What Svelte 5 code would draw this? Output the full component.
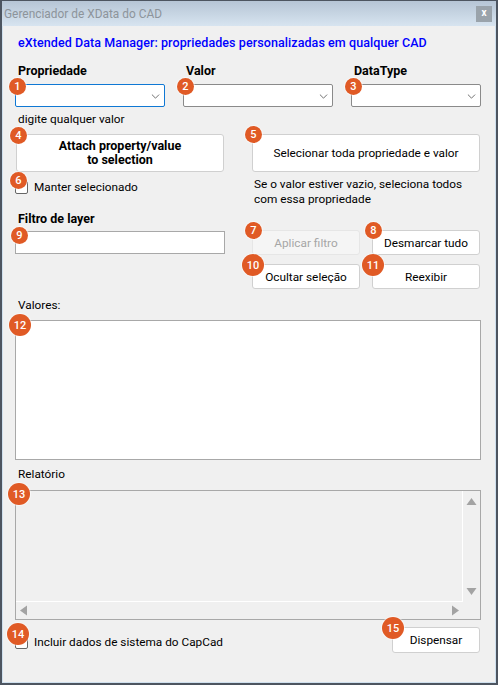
<script lang="ts">
	const combos = [
		{ label: 'Propriedade', n: 1, focused: true },
		{ label: 'Valor', n: 2, focused: false },
		{ label: 'DataType', n: 3, focused: false }
	];
</script>

{#snippet badge(n: number, cls: string)}
	<span class="badge {cls}">{n}</span>
{/snippet}

{#snippet chevron()}
	<svg class="chevron" viewBox="0 0 10 6" width="9" height="5" aria-hidden="true">
		<path d="M.7.7 5 5 9.3.7" fill="none" stroke="#555" stroke-width="1" />
	</svg>
{/snippet}

<div class="window">
	<header class="titlebar">
		<span class="title">Gerenciador de XData do CAD</span>
		<button class="close" type="button" aria-label="Fechar">x</button>
	</header>

	<main class="body">
		<p class="heading">eXtended Data Manager: propriedades personalizadas em qualquer CAD</p>

		<div class="combos">
			{#each combos as c}
				<div class="field">
					<span class="bold-label">{c.label}</span>
					<div class="combo" class:focused={c.focused}>
						{@render badge(c.n, 'sm at-combo')}
						{@render chevron()}
					</div>
				</div>
			{/each}
		</div>
		<p class="hint">digite qualquer valor</p>

		<div class="columns">
			<div class="left">
				<div class="anchor">
					{@render badge(4, 'sm at-attach')}
					<button class="btn big strong" type="button">Attach property/value<br />to selection</button>
				</div>
				<label class="check keep">
					{@render badge(6, 'sm at-check')}
					<span class="box"></span>
					Manter selecionado
				</label>
				<span class="bold-label filter-label">Filtro de layer</span>
				<div class="textbox">{@render badge(9, 'sm at-filter')}</div>
			</div>

			<div class="right">
				<div class="anchor">
					{@render badge(5, 'sm at-action')}
					<button class="btn big" type="button">Selecionar toda propriedade e valor</button>
				</div>
				<p class="note">Se o valor estiver vazio, seleciona todos<br />com essa propriedade</p>
				<div class="actions">
					<div class="anchor">
						{@render badge(7, 'sm at-action')}
						<button class="btn" type="button" disabled>Aplicar filtro</button>
					</div>
					<div class="anchor">
						{@render badge(8, 'sm at-action')}
						<button class="btn" type="button">Desmarcar tudo</button>
					</div>
					<div class="anchor">
						{@render badge(10, 'lg at-action-lg')}
						<button class="btn" type="button">Ocultar seleção</button>
					</div>
					<div class="anchor">
						{@render badge(11, 'lg at-action-lg')}
						<button class="btn" type="button">Reexibir</button>
					</div>
				</div>
			</div>
		</div>

		<span class="plain-label values-label">Valores:</span>
		<div class="values">{@render badge(12, 'lg at-values')}</div>

		<span class="plain-label report-label">Relatório</span>
		<div class="report">
			{@render badge(13, 'lg at-report')}
			<div class="report-text"></div>
			<div class="vbar">
				<svg viewBox="0 0 10 7" width="11" height="7" aria-hidden="true"><path d="M5 0 10 7H0z" fill="#a3a3a3" /></svg>
				<svg viewBox="0 0 10 7" width="11" height="7" aria-hidden="true"><path d="M0 0H10L5 7z" fill="#a3a3a3" /></svg>
			</div>
			<div class="hbar">
				<svg viewBox="0 0 7 10" width="7" height="11" aria-hidden="true"><path d="M7 0V10L0 5z" fill="#a3a3a3" /></svg>
				<svg viewBox="0 0 7 10" width="7" height="11" aria-hidden="true"><path d="M0 0V10L7 5z" fill="#a3a3a3" /></svg>
			</div>
			<div class="corner"></div>
		</div>

		<div class="footer">
			<label class="check">
				{@render badge(14, 'lg at-check-lg')}
				<span class="box"></span>
				Incluir dados de sistema do CapCad
			</label>
			<div class="anchor dismiss">
				{@render badge(15, 'lg at-action-lg')}
				<button class="btn" type="button">Dispensar</button>
			</div>
		</div>
	</main>
</div>

<style>
	:global(body) {
		margin: 0;
		background: #f0f0f0;
	}
	.window {
		box-sizing: border-box;
		width: 498px;
		height: 685px;
		display: flex;
		flex-direction: column;
		border: 2px solid #4d5560;
		border-top-width: 1px;
		font-family: Roboto, 'Noto Sans', sans-serif;
		font-size: 11.8px;
		color: #000;
		background: #f0f0f0;
	}
	.titlebar {
		flex: none;
		height: 25px;
		display: flex;
		align-items: center;
		justify-content: space-between;
		padding: 0 4px 0 2px;
		background: linear-gradient(#b6c5d5, #d7e4f0);
	}
	.title {
		color: #8d949b;
		font-size: 11.9px;
	}
	.close {
		width: 16px;
		height: 16px;
		padding: 0 0 2px;
		border: 0;
		background: #9aa3ab;
		color: #fff;
		font: bold 10px Roboto, sans-serif;
	}
	.body {
		flex: 1;
		display: flex;
		flex-direction: column;
		padding: 0 14px 0 12px;
		border-bottom: 1px solid #cfe0ee;
		border-left: 1px solid #cfe0ee;
		border-right: 1px solid #cfe0ee;
	}
	p {
		margin: 0;
	}
	.heading {
		margin: 9px 0 0 3px;
		height: 16px;
		line-height: 16px;
		color: #0000ff;
		font-size: 12.5px;
		font-weight: 500;
		letter-spacing: 0.08px;
		white-space: nowrap;
	}
	.combos {
		display: grid;
		grid-template-columns: 150px 150px 130px;
		gap: 18px;
		margin-top: 12px;
	}
	.field {
		display: flex;
		flex-direction: column;
	}
	.bold-label {
		height: 16px;
		line-height: 16px;
		padding-left: 3px;
		font-size: 12.5px;
		font-weight: 700;
	}
	.combo {
		position: relative;
		box-sizing: border-box;
		height: 23px;
		margin-top: 5px;
		background: #fff;
		border: 1px solid #8a8a8a;
		border-radius: 2px;
	}
	.combo.focused {
		border-color: #0f78d4;
	}
	.chevron {
		position: absolute;
		right: 4px;
		top: 9px;
	}
	.hint {
		margin: 4px 0 0 3px;
		height: 16px;
		line-height: 16px;
	}
	.columns {
		display: grid;
		grid-template-columns: 210px 228px;
		gap: 27px;
		margin-top: 7px;
	}
	.left,
	.right {
		display: flex;
		flex-direction: column;
	}
	.anchor {
		position: relative;
		display: flex;
	}
	.btn {
		flex: 1;
		box-sizing: border-box;
		height: 25px;
		padding: 0;
		background: #fff;
		border: 1px solid #d0d0d0;
		border-radius: 3px;
		font: inherit;
		color: #000;
	}
	.btn:disabled {
		background: #f5f5f5;
		border-color: #e6e6e6;
		color: #a6a6a6;
	}
	.btn.big {
		height: 38px;
		line-height: 14px;
	}
	.btn.strong {
		font-size: 12.5px;
		font-weight: 700;
	}
	.left .anchor {
		margin: 0 1px;
	}
	.check {
		position: relative;
		display: flex;
		align-items: center;
		gap: 6px;
		height: 16px;
	}
	.box {
		box-sizing: border-box;
		width: 13px;
		height: 13px;
		margin-top: 1px;
		background: #fff;
		border: 1px solid #666;
		border-radius: 2px;
	}
	.keep {
		margin-top: 7px;
	}
	.filter-label {
		margin-top: 16px;
	}
	.textbox {
		position: relative;
		box-sizing: border-box;
		height: 23px;
		margin-top: 4px;
		background: #fff;
		border: 1px solid #a8a8a8;
	}
	.note {
		margin: 5px 0 0 2px;
		line-height: 15px;
	}
	.actions {
		display: grid;
		grid-template-columns: 108px 108px;
		gap: 9px 12px;
		margin-top: 23px;
	}
	.plain-label {
		height: 16px;
		line-height: 16px;
		padding-left: 3px;
	}
	.values-label {
		margin-top: 8px;
	}
	.values {
		position: relative;
		box-sizing: border-box;
		height: 140px;
		margin-top: 7px;
		background: #fff;
		border: 1px solid #a8a8a8;
	}
	.report-label {
		margin-top: 6px;
	}
	.report {
		position: relative;
		box-sizing: border-box;
		height: 130px;
		margin-top: 8px;
		display: grid;
		grid-template-columns: 1fr 17px;
		grid-template-rows: 1fr 17px;
		border: 1px solid #a8a8a8;
	}
	.report-text {
		border-right: 1px solid #fff;
		border-bottom: 1px solid #fff;
	}
	.vbar {
		display: flex;
		flex-direction: column;
		justify-content: space-between;
		align-items: center;
		padding: 7px 0 7px;
	}
	.hbar {
		display: flex;
		justify-content: space-between;
		align-items: center;
		padding: 0 4px 0 4px;
	}
	.footer {
		display: flex;
		justify-content: space-between;
		align-items: flex-start;
		margin-top: 7px;
	}
	.footer .check {
		margin-top: 7px;
	}
	.dismiss {
		width: 88px;
		margin-right: 1px;
	}
	.dismiss .btn {
		height: 26px;
	}
	.badge {
		position: absolute;
		z-index: 1;
		display: flex;
		align-items: center;
		justify-content: center;
		box-sizing: border-box;
		border-radius: 50%;
		background: #e05a25;
		color: #fff;
		font-weight: 500;
		font-size: 11px;
		box-shadow: 0 0 0 1px rgba(255, 255, 255, 0.5);
	}
	.sm {
		width: 17px;
		height: 17px;
	}
	.lg {
		width: 22px;
		height: 22px;
	}
	.at-combo { left: -7px; top: -7px; }
	.at-attach { left: -6px; top: -7px; }
	.at-check { left: -5px; top: -7px; }
	.at-filter { left: -5px; top: -5px; }
	.at-action { left: -7px; top: -8px; }
	.at-action-lg { left: -10px; top: -10px; }
	.at-values { left: -7px; top: -7px; }
	.at-report { left: -8px; top: -8px; }
	.at-check-lg { left: -8px; top: -11px; }
</style>
